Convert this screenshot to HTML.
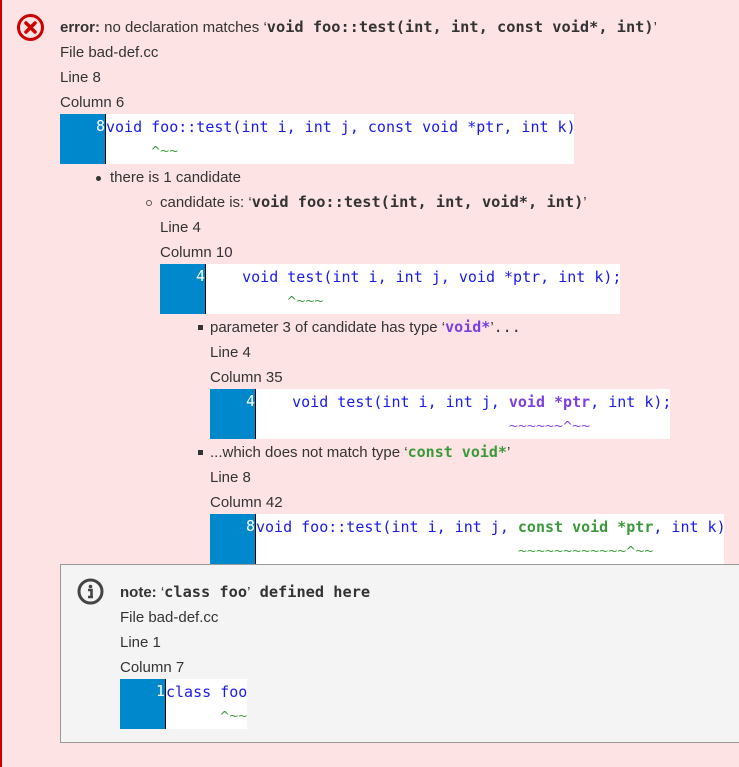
<!DOCTYPE html>
<html><head><meta charset="utf-8"><style>
*{margin:0;padding:0;box-sizing:border-box}
body{width:739px;height:767px;overflow:hidden;background:#fde3e3;position:relative;font-family:"Liberation Sans",sans-serif;font-size:15px;color:#333}
.bl{position:absolute;left:0;top:0;width:2px;height:767px;background:#cc0000}
.t{position:absolute;line-height:25px;height:25px;white-space:pre}
.m{font-family:"DejaVu Sans Mono","Liberation Mono",monospace;font-size:15px}
.b{font-weight:bold}
.hm{font-size:15.3px}
.cb{position:absolute;height:50px;background:#fff;overflow:hidden}
.g{position:absolute;left:0;top:0;width:46px;height:50px;background:#0088cc;border-right:1px solid #000;color:#fff;text-align:right;font-family:"DejaVu Sans Mono",monospace;font-size:15px;line-height:25px;padding-right:0}
.c{position:absolute;left:46px;top:1px;white-space:pre;font-family:"DejaVu Sans Mono",monospace;font-size:15px;line-height:25px;color:#1a1aee}
.c2{top:24px;color:#3a9a3a;font-size:15px;transform:scaleY(0.8);transform-origin:0 70%}
.p{color:#7b3fe4;font-weight:bold}
.gr{color:#3a9a3a;font-weight:bold}
.dot{position:absolute;width:5px;height:5px;background:#333;border-radius:50%}
.circ{position:absolute;width:6px;height:6px;border:1px solid #555;border-radius:50%}
.sq{position:absolute;width:5px;height:5px;background:#333}
.note{position:absolute;left:60px;top:564px;width:690px;height:179px;background:#f4f4f4;border:1px solid #999}
</style></head><body>
<div class="bl"></div>
<svg style="position:absolute;left:16px;top:13px" width="29" height="29" viewBox="0 0 29 29"><circle cx="14.5" cy="14.5" r="12" fill="none" stroke="#cc0000" stroke-width="3"/><path d="M10 10L19 19M19 10L10 19" stroke="#cc0000" stroke-width="3.5" stroke-linecap="round"/></svg>
<div class="t" style="left:60px;top:15px"><b>error:</b> no declaration matches ‘<span class="m b hm">void foo::test(int, int, const void*, int)</span>’</div>
<div class="t" style="left:60px;top:40px">File bad-def.cc</div>
<div class="t" style="left:60px;top:65px">Line 8</div>
<div class="t" style="left:60px;top:90px">Column 6</div>
<div class="cb" style="left:60px;top:114px;width:514px"><div class="g">8</div><div class="c">void foo::test(int i, int j, const void *ptr, int k)</div><div class="c c2">     ^~~</div></div>
<div class="dot" style="left:96px;top:176px"></div>
<div class="t" style="left:110px;top:165px">there is 1 candidate</div>
<div class="circ" style="left:146px;top:200px"></div>
<div class="t" style="left:160px;top:190px">candidate is: ‘<span class="m b hm">void foo::test(int, int, void*, int)</span>’</div>
<div class="t" style="left:160px;top:215px">Line 4</div>
<div class="t" style="left:160px;top:240px">Column 10</div>
<div class="cb" style="left:160px;top:264px;width:460px"><div class="g">4</div><div class="c">    void test(int i, int j, void *ptr, int k);</div><div class="c c2">         ^~~~</div></div>
<div class="sq" style="left:198px;top:325px"></div>
<div class="t" style="left:210px;top:315px">parameter 3 of candidate has type ‘<span class="m p">void*</span>’<span class="m">...</span></div>
<div class="t" style="left:210px;top:340px">Line 4</div>
<div class="t" style="left:210px;top:365px">Column 35</div>
<div class="cb" style="left:210px;top:389px;width:460px"><div class="g">4</div><div class="c">    void test(int i, int j, <span class="p">void *ptr</span>, int k);</div><div class="c c2" style="color:#7b3fe4">                            ~~~~~~^~~</div></div>
<div class="sq" style="left:198px;top:450px"></div>
<div class="t" style="left:210px;top:440px">...which does not match type ‘<span class="m gr">const void*</span>’</div>
<div class="t" style="left:210px;top:465px">Line 8</div>
<div class="t" style="left:210px;top:490px">Column 42</div>
<div class="cb" style="left:210px;top:514px;width:514px"><div class="g">8</div><div class="c">void foo::test(int i, int j, <span class="gr">const void *ptr</span>, int k)</div><div class="c c2">                             ~~~~~~~~~~~~^~~</div></div>
<div class="note"></div>
<svg style="position:absolute;left:77px;top:578px" width="27" height="27" viewBox="0 0 27 27"><circle cx="13.5" cy="13.5" r="11.5" fill="none" stroke="#444" stroke-width="3"/><circle cx="13.5" cy="8.5" r="1.8" fill="#444"/><path d="M11 12h3.5v6.5M11 19h5" stroke="#444" stroke-width="2.6" fill="none"/></svg>
<div class="t" style="left:120px;top:580px"><b>note:</b> ‘<span class="m b hm">class foo</span>’<span class="m b hm"> defined here</span></div>
<div class="t" style="left:120px;top:605px">File bad-def.cc</div>
<div class="t" style="left:120px;top:630px">Line 1</div>
<div class="t" style="left:120px;top:655px">Column 7</div>
<div class="cb" style="left:120px;top:679px;width:127px"><div class="g">1</div><div class="c">class foo</div><div class="c c2">      ^~~</div></div>
</body></html>
